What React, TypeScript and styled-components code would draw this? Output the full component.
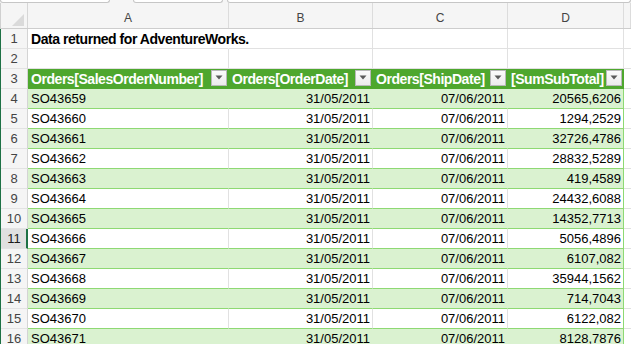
import React from "react";
import styled, { createGlobalStyle, css } from "styled-components";

const GlobalStyle = createGlobalStyle`
  html, body {
    margin: 0;
    padding: 0;
    background: #ffffff;
    overflow: hidden;
  }
  * { box-sizing: border-box; }
`;

const COLS = "27px 201px 144px 135px 116px 1fr";

const GREEN_HEAD = "#4ea72e";
const GREEN_BAND = "#daf2d0";
const GREEN_LINE = "#8ed973";
const GRID = "#e1e1e1";
const HEAD_BG = "#f5f5f5";

const Sheet = styled.div`
  width: 631px;
  height: 344px;
  overflow: hidden;
  display: flex;
  flex-direction: column;
  font-family: "Liberation Sans", Arial, sans-serif;
  color: #000;
`;

const TopStrip = styled.div`
  height: 3px;
  flex: none;
  display: flex;
  background: ${HEAD_BG};
`;

const StripBox = styled.div<{ $w: number; $gap?: number }>`
  width: ${(p) => p.$w}px;
  margin-left: ${(p) => p.$gap ?? 0}px;
  height: 3px;
  background: #ffffff;
  border: 1px solid #c6c6c6;
  border-top: none;
  border-radius: 0 0 4px 4px;
`;

const Row = styled.div<{ $edge?: string }>`
  display: grid;
  grid-template-columns: ${COLS};
  flex: none;
  border-left: 1px solid ${(p) => p.$edge ?? "#1e7145"};
`;

const ColHeadRow = styled(Row)`
  height: 26px;
  background: ${HEAD_BG};
  border-bottom: 1px solid #cdcdcd;
`;

const Corner = styled.div`
  border-right: 1px solid #d6d6d6;
  display: flex;
  align-items: flex-end;
  justify-content: flex-end;
  padding: 0 3px 2px 0;
`;

const ColLetter = styled.div`
  border-right: 1px solid #dcdcdc;
  display: flex;
  align-items: flex-end;
  justify-content: center;
  padding-bottom: 3px;
  font-size: 12px;
  line-height: 14px;
  color: #444444;
`;

const RowNum = styled.div<{ $selected?: boolean }>`
  height: 20px;
  display: flex;
  align-items: center;
  justify-content: center;
  font-size: 13px;
  color: #444444;
  background: ${HEAD_BG};
  border-right: 1px solid #d4d4d4;
  border-bottom: 1px solid #e3e3e3;
  ${(p) =>
    p.$selected &&
    css`
      background: #e0e0e0;
      color: #1b1b1b;
      border-right: 2px solid #1e7145;
      padding-left: 1px;
    `}
`;

type Kind = "plain" | "head" | "band" | "white" | "outside";

const kindStyles: Record<Kind, ReturnType<typeof css>> = {
  plain: css`
    background: transparent;
    border-right: 1px solid ${GRID};
    border-bottom: 1px solid ${GRID};
  `,
  head: css`
    background: ${GREEN_HEAD};
    border-right: 1px solid ${GREEN_HEAD};
    border-bottom: 1px solid ${GREEN_HEAD};
  `,
  band: css`
    background: ${GREEN_BAND};
    border-right: 1px solid ${GREEN_BAND};
    border-bottom: 1px solid ${GREEN_LINE};
  `,
  white: css`
    background: #ffffff;
    border-right: 1px solid ${GRID};
    border-bottom: 1px solid ${GREEN_LINE};
  `,
  outside: css`
    background: #ffffff;
    border-bottom: 1px solid ${GRID};
  `,
};

const Cell = styled.div<{
  $kind: Kind;
  $align?: "left" | "right";
  $last?: boolean;
  $spill?: boolean;
}>`
  height: 20px;
  min-width: 0;
  display: flex;
  align-items: center;
  justify-content: ${(p) => (p.$align === "right" ? "flex-end" : "flex-start")};
  padding: 0 2px 0 3px;
  font-size: 13px;
  white-space: nowrap;
  overflow: ${(p) => (p.$spill ? "visible" : "hidden")};
  ${(p) => kindStyles[p.$kind]}
  ${(p) =>
    p.$last &&
    css`
      border-right-color: ${GREEN_LINE};
    `}
  ${(p) =>
    p.$spill &&
    css`
      border-right-color: transparent;
    `}
`;

/* narrow bold lettering used for the title and the table header */
const narrowBold = css`
  font-family: "Liberation Sans", Arial, sans-serif;
  font-weight: 700;
  font-size: 14px;
  letter-spacing: -0.45px;
`;

const Title = styled.span`
  ${narrowBold}
`;

const HeadCell = styled(Cell)`
  justify-content: space-between;
  padding: 0 1px 0 3px;
  color: #ffffff;
`;

const HeadText = styled.span`
  ${narrowBold}
`;

const FilterButton = styled.span`
  flex: none;
  width: 16px;
  height: 16px;
  margin-top: -2px;
  display: flex;
  align-items: center;
  justify-content: center;
  background: linear-gradient(#fbfbfb, #ececec);
  border: 1px solid #b9b9b9;
`;

const CornerMark = () => (
  <svg width="12" height="12" viewBox="0 0 12 12">
    <polygon points="12,0 12,12 0,12" fill="#dadada" />
  </svg>
);

const DropArrow = () => (
  <svg width="8" height="5" viewBox="0 0 8 5">
    <polygon points="0.5,0.5 7.5,0.5 4,4.5" fill="#5a5a5a" />
  </svg>
);

const headers = ["Orders[SalesOrderNumber]", "Orders[OrderDate]", "Orders[ShipDate]", "[SumSubTotal]"];

const orders: [string, string][] = [
  ["SO43659", "20565,6206"],
  ["SO43660", "1294,2529"],
  ["SO43661", "32726,4786"],
  ["SO43662", "28832,5289"],
  ["SO43663", "419,4589"],
  ["SO43664", "24432,6088"],
  ["SO43665", "14352,7713"],
  ["SO43666", "5056,4896"],
  ["SO43667", "6107,082"],
  ["SO43668", "35944,1562"],
  ["SO43669", "714,7043"],
  ["SO43670", "6122,082"],
  ["SO43671", "8128,7876"],
];

const SELECTED_ROW = 11;

export default function App() {
  return (
    <>
      <GlobalStyle />
      <Sheet>
        <TopStrip>
          <StripBox $w={110} />
          <StripBox $w={90} $gap={23} />
          <StripBox $w={404} $gap={4} />
        </TopStrip>

        <ColHeadRow $edge="#d0d0d0">
          <Corner>
            <CornerMark />
          </Corner>
          {["A", "B", "C", "D", ""].map((l, i) => (
            <ColLetter key={i}>{l}</ColLetter>
          ))}
        </ColHeadRow>

        <Row>
          <RowNum>1</RowNum>
          <Cell $kind="plain" $spill>
            <Title>Data returned for AdventureWorks.</Title>
          </Cell>
          <Cell $kind="plain" />
          <Cell $kind="plain" />
          <Cell $kind="plain" />
          <Cell $kind="outside" />
        </Row>

        <Row>
          <RowNum>2</RowNum>
          <Cell $kind="plain" />
          <Cell $kind="plain" />
          <Cell $kind="plain" />
          <Cell $kind="plain" />
          <Cell $kind="outside" />
        </Row>

        <Row>
          <RowNum>3</RowNum>
          {headers.map((h) => (
            <HeadCell key={h} $kind="head">
              <HeadText>{h}</HeadText>
              <FilterButton>
                <DropArrow />
              </FilterButton>
            </HeadCell>
          ))}
          <Cell $kind="outside" />
        </Row>

        {orders.map(([so, total], i) => {
          const n = i + 4;
          const kind: Kind = i % 2 === 0 ? "band" : "white";
          return (
            <Row key={so}>
              <RowNum $selected={n === SELECTED_ROW}>{n}</RowNum>
              <Cell $kind={kind}>{so}</Cell>
              <Cell $kind={kind} $align="right">
                31/05/2011
              </Cell>
              <Cell $kind={kind} $align="right">
                07/06/2011
              </Cell>
              <Cell $kind={kind} $align="right" $last>
                {total}
              </Cell>
              <Cell $kind="outside" />
            </Row>
          );
        })}
      </Sheet>
    </>
  );
}
